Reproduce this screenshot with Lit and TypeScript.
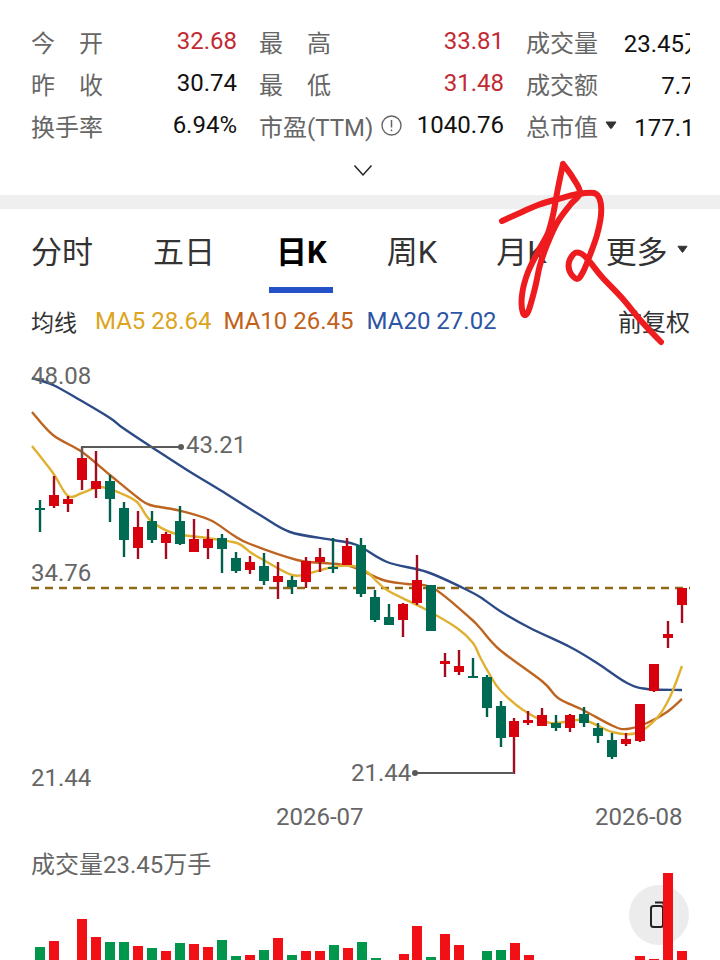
import { LitElement, html, css, svg } from "lit";
import { customElement } from "lit/decorators.js";

// x, wick top, wick bottom, body top, body bottom, r = red / g = green
type Candle = [number, number, number, number, number, "r" | "g"];

const candles: Candle[] = [
  [40, 500, 532, 508, 510, "g"],
  [54, 476, 508, 495, 506, "r"],
  [68, 496, 512, 499, 504, "r"],
  [82, 447, 490, 458, 480, "r"],
  [96, 451, 498, 481, 489, "r"],
  [110, 475, 522, 481, 499, "g"],
  [124, 502, 557, 508, 540, "g"],
  [138, 511, 559, 527, 548, "r"],
  [152, 511, 543, 521, 540, "g"],
  [166, 532, 559, 534, 543, "r"],
  [180, 506, 545, 521, 544, "g"],
  [194, 519, 552, 539, 552, "r"],
  [208, 529, 559, 539, 548, "r"],
  [222, 534, 573, 538, 549, "g"],
  [236, 552, 573, 558, 571, "g"],
  [250, 556, 574, 562, 570, "r"],
  [264, 553, 585, 566, 581, "g"],
  [278, 562, 599, 576, 582, "r"],
  [292, 576, 594, 580, 587, "g"],
  [306, 557, 588, 561, 582, "r"],
  [320, 548, 572, 557, 562, "r"],
  [333, 538, 573, 567, 569, "g"],
  [347, 538, 565, 546, 565, "r"],
  [361, 538, 597, 545, 594, "g"],
  [375, 590, 622, 597, 620, "g"],
  [389, 604, 625, 617, 625, "g"],
  [403, 603, 637, 604, 620, "r"],
  [417, 555, 605, 580, 603, "r"],
  [431, 585, 631, 585, 631, "g"],
  [445, 653, 677, 661, 664, "r"],
  [459, 650, 675, 666, 672, "r"],
  [473, 658, 678, 676, 678, "g"],
  [487, 675, 717, 677, 708, "g"],
  [501, 701, 747, 706, 738, "g"],
  [514, 718, 774, 721, 737, "r"],
  [528, 711, 725, 720, 723, "r"],
  [542, 708, 726, 715, 726, "r"],
  [556, 715, 731, 723, 728, "g"],
  [570, 714, 732, 715, 728, "r"],
  [584, 707, 727, 714, 723, "g"],
  [598, 723, 743, 728, 736, "g"],
  [612, 733, 759, 740, 757, "g"],
  [626, 733, 746, 739, 744, "r"],
  [640, 704, 742, 704, 741, "r"],
  [654, 664, 692, 664, 691, "r"],
  [668, 621, 648, 634, 638, "r"],
  [682, 588, 623, 588, 605, "r"],
];

const ma5 =
  "32,446 53,473 68,496 82,493 100,487 120,493 137,502 150,520 173,533 207,538 237,543 250,552 260,558 292,575 310,573 333,567 353,566 367,572 387,590 423,608 457,628 473,643 480,657 490,675 500,690 523,710 550,723 583,720 612,732 637,733 657,718 670,697 682,666";
const ma10 =
  "32,412 53,435 82,452 110,475 137,497 150,505 177,510 210,520 233,535 250,544 297,560 323,563 350,566 383,580 407,584 433,588 470,618 480,628 500,650 543,682 558,698 583,710 613,726 627,729 647,723 667,712 682,699";
const ma20 =
  "32,378 53,385 80,400 110,418 123,428 153,448 187,470 220,490 260,515 290,532 333,540 357,545 387,562 427,572 463,588 480,597 500,611 530,628 570,647 597,663 627,683 647,689 682,690";

const scribbleA =
  "502,221 522,212 538,205 558,199 578,194 594,193 600,200 601,215 597,235 590,255 583,272 577,279 570,272 569,262 575,253 582,254 590,262 602,277 622,298 642,322 661,342";
const scribbleB =
  "563,164 573,178 580,193 570,205 557,223 547,245 540,265 535,288 528,312 523,313 522,295 528,272 540,248 548,233 553,215 558,188 563,164";

// x, top of the bar
const volumes: [number, number, "r" | "g"][] = [
  [40, 947, "g"], [54, 941, "r"], [82, 919, "r"], [96, 937, "r"], [110, 942, "g"],
  [124, 942, "g"], [138, 946, "r"], [152, 948, "g"], [166, 951, "r"], [180, 943, "g"],
  [194, 944, "r"], [208, 947, "r"], [222, 940, "g"], [236, 956, "g"], [250, 955, "r"],
  [264, 950, "g"], [278, 938, "r"], [292, 955, "g"], [306, 951, "r"], [320, 951, "r"],
  [334, 945, "g"], [348, 948, "r"], [362, 942, "g"], [376, 958, "g"], [404, 954, "r"],
  [417, 926, "r"], [431, 957, "g"], [445, 934, "r"], [459, 945, "r"], [487, 951, "g"],
  [501, 950, "g"], [515, 943, "r"], [529, 955, "r"], [640, 956, "r"], [654, 959, "r"],
  [668, 873, "r"], [682, 951, "r"],
];

// catmull-rom through the points, so the traced lines don't look faceted
function smooth(points: string) {
  const p = points.split(" ").map((s) => s.split(",").map(Number));
  let d = `M${p[0][0]} ${p[0][1]}`;
  for (let i = 0; i < p.length - 1; i++) {
    const a = p[Math.max(i - 1, 0)];
    const b = p[i];
    const c = p[i + 1];
    const e = p[Math.min(i + 2, p.length - 1)];
    const c1x = b[0] + (c[0] - a[0]) / 6;
    const c1y = b[1] + (c[1] - a[1]) / 6;
    const c2x = c[0] - (e[0] - b[0]) / 6;
    const c2y = c[1] - (e[1] - b[1]) / 6;
    d += `C${c1x.toFixed(1)} ${c1y.toFixed(1)} ${c2x.toFixed(1)} ${c2y.toFixed(1)} ${c[0]} ${c[1]}`;
  }
  return d;
}

@customElement("app-root")
export class AppRoot extends LitElement {
  static styles = css`
    :host {
      display: block;
      position: relative;
      width: 720px;
      height: 960px;
      overflow: hidden;
      background: #fff;
      font-family: Roboto, "Noto Sans CJK SC", sans-serif;
      color: #111;
    }
    .stats {
      width: 659px;
      margin-left: 31px;
      padding-top: 20px;
      overflow: hidden;
    }
    .stats-grid {
      display: grid;
      grid-template-columns: 206px 245px 206px;
      column-gap: 22px;
      grid-auto-rows: 42px;
      width: 704px;
      font-size: 24px;
    }
    .cell {
      display: flex;
      align-items: center;
      justify-content: space-between;
      white-space: nowrap;
    }
    .label {
      display: flex;
      align-items: center;
      color: #666;
    }
    .spread {
      width: 72px;
      justify-content: space-between;
    }
    .red {
      color: #c22a34;
    }
    .info {
      margin-left: 8px;
    }
    .caret {
      margin-left: 7px;
    }
    .expand {
      display: flex;
      justify-content: center;
      align-items: center;
      height: 49px;
      padding-left: 6px;
    }
    .divider {
      height: 14px;
      background: #efefef;
    }
    .tabs {
      display: flex;
      gap: 60px;
      height: 84px;
      padding-left: 31px;
      font-size: 31px;
      color: #333;
    }
    .tab {
      position: relative;
      display: flex;
      align-items: center;
      box-sizing: border-box;
      height: 84px;
      padding-bottom: 4px;
      white-space: nowrap;
    }
    .tab.active {
      color: #000;
      font-weight: 700;
      margin-left: 1px;
    }
    .tab.active::after {
      content: "";
      position: absolute;
      left: -7px;
      right: -6px;
      bottom: 0;
      height: 6px;
      background: #2450c8;
    }
    .tab.month {
      margin-left: -1px;
    }
    .tab.more {
      margin-left: -1px;
    }
    .tab .caret {
      margin-left: 9px;
    }
    .ma-row {
      display: flex;
      align-items: center;
      box-sizing: border-box;
      height: 58px;
      padding: 0 30px 3px 31px;
      font-size: 24px;
      white-space: nowrap;
    }
    .ma-row .title {
      color: #333;
      font-size: 23px;
      margin-right: 18px;
    }
    .ma5 {
      color: #dca521;
      margin-right: 12px;
    }
    .ma10 {
      color: #c2611a;
      margin-right: 13px;
    }
    .ma20 {
      color: #2d55a5;
    }
    .adjust {
      margin-left: auto;
      color: #333;
    }
    .chart {
      display: block;
      width: 720px;
      height: 499px;
    }
    .chart text,
    .vol-title {
      fill: #666;
      color: #666;
      font-size: 24px;
    }
    .line {
      fill: none;
      stroke-width: 2.4;
      stroke-linejoin: round;
    }
    .l5 {
      stroke: #e0b030;
    }
    .l10 {
      stroke: #bd6420;
    }
    .l20 {
      stroke: #2c4a86;
    }
    .dash {
      stroke: #8f6a14;
      stroke-width: 2.5;
      stroke-dasharray: 8 6;
    }
    .leader {
      stroke: #5a5a5a;
      stroke-width: 2;
      fill: none;
    }
    .dot {
      fill: #5a5a5a;
    }
    .wick-r {
      stroke: #a00c20;
      stroke-width: 2.4;
    }
    .wick-g {
      stroke: #005f4a;
      stroke-width: 2.4;
    }
    .body-r {
      fill: #d9000e;
    }
    .body-g {
      fill: #006b52;
    }
    .volume {
      display: grid;
      height: 110px;
    }
    .volume > * {
      grid-area: 1 / 1;
    }
    .vol-title {
      padding-left: 31px;
      line-height: 30px;
      align-self: start;
      z-index: 1;
    }
    .vol-chart {
      display: block;
      width: 720px;
      height: 110px;
    }
    .bar-r {
      fill: #f01015;
    }
    .bar-g {
      fill: #00964c;
    }
    .fab {
      fill: #ececec;
    }
    .fab-icon {
      fill: none;
      stroke: #222;
      stroke-width: 2;
    }
    .scribble {
      position: absolute;
      left: 0;
      top: 0;
      width: 720px;
      height: 960px;
      pointer-events: none;
    }
    .scribble path {
      fill: none;
      stroke: #ee1b1f;
      stroke-width: 6;
      stroke-linecap: round;
      stroke-linejoin: round;
    }
  `;

  private caret(w: number, h: number) {
    return html`<svg class="caret" width=${w} height=${h} viewBox="0 0 12 8">
      <path d="M1 1h10L6.6 7.2a.8.8 0 0 1-1.2 0z" fill="#333" stroke="#333" stroke-linejoin="round" />
    </svg>`;
  }

  private spread(a: string, b: string) {
    return html`<span class="label spread"><span>${a}</span><span>${b}</span></span>`;
  }

  private renderStats() {
    return html`
      <div class="stats">
        <div class="stats-grid">
          <div class="cell">${this.spread("今", "开")}<span class="red">32.68</span></div>
          <div class="cell">${this.spread("最", "高")}<span class="red">33.81</span></div>
          <div class="cell"><span class="label">成交量</span><span>23.45万手</span></div>

          <div class="cell">${this.spread("昨", "收")}<span>30.74</span></div>
          <div class="cell">${this.spread("最", "低")}<span class="red">31.48</span></div>
          <div class="cell"><span class="label">成交额</span><span>7.72亿</span></div>

          <div class="cell"><span class="label">换手率</span><span>6.94%</span></div>
          <div class="cell">
            <span class="label">市盈(TTM)
              <svg class="info" width="21" height="21" viewBox="0 0 21 21">
                <circle cx="10.5" cy="10.5" r="9.5" fill="none" stroke="#666" stroke-width="1.4" />
                <path d="M10.5 5v7.5M10.5 14.6v1.6" fill="none" stroke="#666" stroke-width="1.5" />
              </svg>
            </span>
            <span>1040.76</span>
          </div>
          <div class="cell">
            <span class="label">总市值${this.caret(12, 8)}</span><span>177.12亿</span>
          </div>
        </div>
      </div>
      <div class="expand">
        <svg width="20" height="13" viewBox="0 0 20 13">
          <path d="M1.5 1.5L10 11l8.5-9.5" fill="none" stroke="#222" stroke-width="1.5" />
        </svg>
      </div>
    `;
  }

  private renderTabs() {
    return html`
      <div class="tabs">
        <div class="tab">分时</div>
        <div class="tab">五日</div>
        <div class="tab active">日K</div>
        <div class="tab">周K</div>
        <div class="tab month">月K</div>
        <div class="tab more">更多${this.caret(11, 8)}</div>
      </div>
      <div class="ma-row">
        <span class="title">均线</span>
        <span class="ma5">MA5 28.64</span>
        <span class="ma10">MA10 26.45</span>
        <span class="ma20">MA20 27.02</span>
        <span class="adjust">前复权</span>
      </div>
    `;
  }

  private renderChart() {
    return html`
      <svg class="chart" viewBox="0 351 720 499">
        <line class="dash" x1="31" y1="588" x2="690" y2="588" />
        <path class="line l20" d=${smooth(ma20)} />
        <path class="line l10" d=${smooth(ma10)} />
        <path class="line l5" d=${smooth(ma5)} />
        ${candles.map(
          ([x, wt, wb, bt, bb, c]) => svg`
            <line class="wick-${c}" x1=${x} y1=${wt} x2=${x} y2=${wb} />
            <rect class="body-${c}" x=${x - 5} y=${bt} width="10" height=${bb - bt} />
          `
        )}
        <polyline class="leader" points="82,458 82,447 181,447" />
        <circle class="dot" cx="181" cy="447" r="3" />
        <polyline class="leader" points="415,773 514,773" />
        <circle class="dot" cx="415" cy="773" r="3" />
        <text x="31" y="384">48.08</text>
        <text x="186" y="453">43.21</text>
        <text x="31" y="581">34.76</text>
        <text x="31" y="786">21.44</text>
        <text x="351" y="781">21.44</text>
        <text x="276" y="825">2026-07</text>
        <text x="595" y="825">2026-08</text>
      </svg>
    `;
  }

  private renderVolume() {
    return html`
      <div class="volume">
        <svg class="vol-chart" viewBox="0 850 720 110">
          <circle class="fab" cx="659" cy="915" r="30" />
          <rect class="fab-icon" x="651" y="906" width="12" height="21" rx="2.5" />
          <path class="fab-icon" d="M655 902.5h8l3 10" />
          ${volumes.map(
            ([x, top, c]) => svg`<rect class="bar-${c}" x=${x - 5} y=${top} width="10" height=${960 - top} />`
          )}
        </svg>
        <div class="vol-title">成交量23.45万手</div>
      </div>
    `;
  }

  render() {
    return html`
      ${this.renderStats()}
      <div class="divider"></div>
      ${this.renderTabs()} ${this.renderChart()} ${this.renderVolume()}
      <svg class="scribble" viewBox="0 0 720 960">
        <path d=${smooth(scribbleA)} />
        <path d=${smooth(scribbleB)} />
      </svg>
    `;
  }
}
